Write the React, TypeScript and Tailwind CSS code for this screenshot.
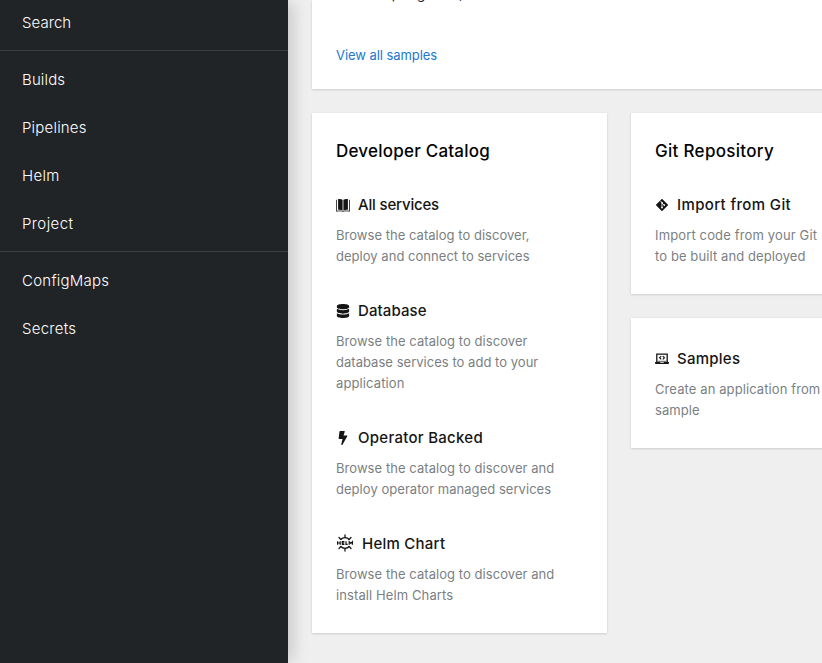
import React from "react";

const iconBox = "h-[14px] w-[14px] shrink-0";

function CatalogIcon() {
  return (
    <svg viewBox="0 0 14 14" className={iconBox} fill="currentColor">
      <path d="M2.100 1c1.800-.2 3.400 0 4.500.7v10.800c-1.200-.8-2.700-1-4.500-.8zM11.900 1c-1.800-.2-3.400 0-4.500.7v10.800c1.200-.8 2.700-1 4.500-.8z" />
      <path d="M.5 1.800v11.500c2.400-.6 4.400-.5 6.500.1 2.100-.6 4.100-.7 6.500-.1V1.800" fill="none" stroke="currentColor" strokeWidth=".8" />
    </svg>
  );
}

function DatabaseIcon() {
  return (
    <svg viewBox="0 0 448 512" className={iconBox} fill="currentColor">
      <path d="M448 73.143v45.714C448 159.143 347.667 192 224 192S0 159.143 0 118.857V73.143C0 32.857 100.333 0 224 0s224 32.857 224 73.143zM448 176v102.857C448 319.143 347.667 352 224 352S0 319.143 0 278.857V176c48.125 33.143 136.208 48.572 224 48.572S399.874 209.143 448 176zm0 160v102.857C448 479.143 347.667 512 224 512S0 479.143 0 438.857V336c48.125 33.143 136.208 48.572 224 48.572S399.874 369.143 448 336z" />
    </svg>
  );
}

function BoltIcon() {
  return (
    <svg viewBox="0 0 320 512" className={iconBox} fill="currentColor">
      <path d="M296 160H180.600l42.600-129.800C227.200 15 215.700 0 200 0H56C44 0 33.800 8.900 32.200 20.800l-32 240C-1.700 275.200 9.500 288 24 288h118.700L96.600 482.500c-3.600 15.200 8 29.500 23.300 29.500 8.400 0 16.400-4.400 20.800-12l176-304c9.300-15.900-2.200-36-20.700-36z" />
    </svg>
  );
}

function HelmIcon() {
  return (
    <svg viewBox="0 0 18 18" className="-mt-[3px] h-[18px] w-[18px] shrink-0" fill="none" stroke="currentColor">
      <path d="M4.500 5.700Q6.300 3.700 9 3.700t4.500 2M4.500 12.300q1.800 2 4.500 2t4.500-2" strokeWidth="1.300" />
      <path d="M9 .9v2.500M9 14.600v2.500M3 3.500l1.700 1.900M15 3.500l-1.700 1.900M3 14.500l1.700-1.900M15 14.500l-1.700-1.900" strokeWidth="1.300" strokeLinecap="round" />
      <path d="M1.600 7.200v3.600M4.200 7.200v3.600M1.600 9h2.600M8.400 7.700H6.300v2.600h2.100M6.200 9h2M10 7.200v3.100h1.700M13.200 10.800V7.700l1.600 1.600 1.600-1.600v3.100" strokeWidth="1.200" />
    </svg>
  );
}

function GitIcon() {
  return (
    <svg viewBox="0 0 14 14" className={iconBox}>
      <path d="M7 1.100 12.900 7 7 12.900 1.100 7z" fill="currentColor" stroke="currentColor" strokeWidth=".6" strokeLinejoin="round" />
      <path d="M5.200 2.700 7 4.700v5M7 5l2.200 2.100" fill="none" stroke="white" strokeWidth=".8" />
      <g fill="white">
        <circle cx="7" cy="4.800" r=".9" />
        <circle cx="7" cy="9.500" r=".9" />
        <circle cx="9.300" cy="7.100" r=".9" />
      </g>
    </svg>
  );
}

function SamplesIcon() {
  return (
    <svg viewBox="0 0 14 14" className={iconBox} fill="none" stroke="currentColor">
      <path d="M1.800 10V2.200h10.400V10" strokeWidth="1.300" />
      <path d="M0 10h5.200v.8h3.600V10H14v1q0 1-1 1H1q-1 0-1-1z" fill="currentColor" stroke="none" />
      <path d="M2.400 9.300h9.200" strokeWidth=".7" />
      <path d="M6.200 4.200 4.600 5.800l1.600 1.600M7.800 4.200l1.600 1.600-1.600 1.600" strokeWidth="1.200" />
    </svg>
  );
}

type Item = {
  icon: React.ReactNode;
  title: string;
  tracking: string;
  lines: [string, string][];
};

const catalog: Item[] = [
  {
    icon: <CatalogIcon />,
    title: "All services",
    tracking: "tracking-[-0.17px]",
    lines: [
      ["Browse the catalog to discover,", "tracking-[0.03px]"],
      ["deploy and connect to services", "tracking-[0.03px]"],
    ],
  },
  {
    icon: <DatabaseIcon />,
    title: "Database",
    tracking: "tracking-[0.1px]",
    lines: [
      ["Browse the catalog to discover", "tracking-[0.06px]"],
      ["database services to add to your", "tracking-[0.03px]"],
      ["application", "tracking-[0.12px]"],
    ],
  },
  {
    icon: <BoltIcon />,
    title: "Operator Backed",
    tracking: "tracking-[0.28px]",
    lines: [
      ["Browse the catalog to discover and", "tracking-[0.06px]"],
      ["deploy operator managed services", "tracking-[0.04px]"],
    ],
  },
  {
    icon: <HelmIcon />,
    title: "Helm Chart",
    tracking: "tracking-[0.25px]",
    lines: [
      ["Browse the catalog to discover and", "tracking-[0.06px]"],
      ["install Helm Charts", "tracking-[0.1px]"],
    ],
  },
];

const gitItem: Item = {
  icon: <GitIcon />,
  title: "Import from Git",
  tracking: "tracking-[0.36px]",
  lines: [
    ["Import code from your Git", "tracking-[0.14px]"],
    ["to be built and deployed", "tracking-[0.1px]"],
  ],
};

const samplesItem: Item = {
  icon: <SamplesIcon />,
  title: "Samples",
  tracking: "tracking-[0.25px]",
  lines: [
    ["Create an application from", "tracking-[0.1px]"],
    ["sample", "tracking-[0.05px]"],
  ],
};

function CatalogItem({ item }: { item: Item }) {
  return (
    <div>
      <div className="flex h-6 items-center gap-2 text-[15px] font-medium text-[#151515]">
        {item.icon}
        <span className={item.tracking}>{item.title}</span>
      </div>
      <div className="mt-2 text-[13px] leading-[21px] text-[#7b7f83]">
        {item.lines.map(([text, tracking]) => (
          <div key={text}>
            <span className={tracking}>{text}</span>
          </div>
        ))}
      </div>
    </div>
  );
}

function Card({ className, children }: { className: string; children: React.ReactNode }) {
  return (
    <section className={`bg-white shadow-[0_1px_2px_0_rgba(3,3,3,0.12),0_0_2px_0_rgba(3,3,3,0.06)] ${className}`}>
      {children}
    </section>
  );
}

function NavItem({ children, tracking }: { children: string; tracking: string }) {
  return (
    <a className="flex h-12 items-center pt-0.5 pl-[22px]">
      <span className={tracking}>{children}</span>
    </a>
  );
}

export default function App() {
  return (
    <div className="flex h-[663px] w-[822px] overflow-hidden whitespace-nowrap bg-[#efefef] font-['Inter',sans-serif]">
      <nav className="z-10 w-72 shrink-0 bg-[#212427] text-[15px] font-light text-white shadow-[8px_0_14px_-2px_rgba(3,3,3,0.15)]">
        <div className="-mt-0.5 border-b border-[#3c3f42] pb-1">
          <NavItem tracking="tracking-[0.05px]">Search</NavItem>
        </div>
        <div className="border-b border-[#3c3f42] py-1">
          <NavItem tracking="tracking-[0.15px]">Builds</NavItem>
          <NavItem tracking="tracking-[0.2px]">Pipelines</NavItem>
          <NavItem tracking="tracking-[0.35px]">Helm</NavItem>
          <NavItem tracking="tracking-[0.4px]">Project</NavItem>
        </div>
        <div className="py-1">
          <NavItem tracking="tracking-[0.25px]">ConfigMaps</NavItem>
          <NavItem tracking="tracking-[0.25px]">Secrets</NavItem>
        </div>
      </nav>
      <main className="flex w-[638px] shrink-0 flex-col gap-6 pl-6">
        <Card className="h-[89px] shrink-0 px-6">
          <div className="-mt-4 h-[61px] text-[13.500px] leading-[21px] text-[#151515]">
            <span className="tracking-[0.1px]">Create Spring Boot,</span>
          </div>
          <a className="block text-[13px] leading-[21px] text-[#2077d0]">
            <span className="tracking-[-0.06px]">View all samples</span>
          </a>
        </Card>
        <div className="grid grid-cols-[295px_295px] items-start gap-6">
          <Card className="h-[520px] px-6 pt-6">
            <h2 className="h-7 text-[17px] leading-7 font-medium text-[#030303]">
              <span className="tracking-[0.22px]">Developer Catalog</span>
            </h2>
            <div className="mt-7 flex flex-col gap-8">
              {catalog.map((item) => (
                <CatalogItem key={item.title} item={item} />
              ))}
            </div>
          </Card>
          <div className="flex flex-col gap-6">
            <Card className="h-[181px] px-6 pt-6">
              <h2 className="h-7 text-[17px] leading-7 font-medium text-[#030303]">
                <span className="tracking-[0.3px]">Git Repository</span>
              </h2>
              <div className="mt-7">
                <CatalogItem item={gitItem} />
              </div>
            </Card>
            <Card className="h-[130px] px-6 pt-[29px]">
              <CatalogItem item={samplesItem} />
            </Card>
          </div>
        </div>
      </main>
    </div>
  );
}
